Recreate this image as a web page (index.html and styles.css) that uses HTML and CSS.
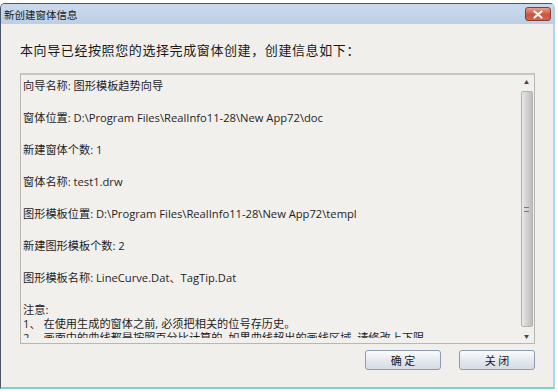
FILE: index.html
```html
<!DOCTYPE html>
<html lang="zh-CN">
<head>
    <meta charset="UTF-8">
    <meta name="viewport" content="width=device-width, initial-scale=1.0">
    <title>新创建窗体信息</title>
    <link rel="stylesheet" href="styles.css">
</head>
<body>
    <div class="window">
        <!-- 标题栏 -->
        <div class="title-bar">
            <span class="title">新创建窗体信息</span>
            <span class="close-btn">
                <svg width="12" height="9" viewBox="0 0 12 9">
                    <path d="M2.5 1.5 L9.5 7.5 M9.5 1.5 L2.5 7.5" stroke="#fff" stroke-width="2.2" stroke-linecap="round"/>
                </svg>
            </span>
        </div>

        <div class="content">
            <h2 class="heading">本向导已经按照您的选择完成窗体创建，创建信息如下：</h2>

            <!-- 信息列表 -->
            <div class="info-box">
                <div class="info-text">
                    <p>向导名称: 图形模板趋势向导</p>
                    <p>窗体位置: D:\Program Files\RealInfo11-28\New App72\doc</p>
                    <p>新建窗体个数: 1</p>
                    <p>窗体名称: test1.drw</p>
                    <p>图形模板位置: D:\Program Files\RealInfo11-28\New App72\templ</p>
                    <p>新建图形模板个数: 2</p>
                    <p>图形模板名称: LineCurve.Dat、TagTip.Dat</p>
                    <div class="notes">
                        注意:<br>
                        1、 在使用生成的窗体之前, 必须把相关的位号存历史。<br>
                        2、 画面中的曲线都是按照百分比计算的, 如果曲线超出的画线区域, 请修改上下限。
                    </div>
                </div>
                <div class="scrollbar">
                    <span class="arrow">&#9650;</span>
                    <div class="thumb"><span class="grip"></span></div>
                    <span class="arrow">&#9660;</span>
                </div>
            </div>

            <div class="buttons">
                <button>确 定</button>
                <button>关 闭</button>
            </div>
        </div>
    </div>
</body>
</html>
```

FILE: styles.css
```css
body {
    margin: 0;
    padding: 0;
    background-color: #fff;
    font-family: "Open Sans", "Noto Sans CJK SC", sans-serif;
    color: #1e1e1e;
}
.window {
    margin-top: 3px;
    width: 552px;
    height: 383px;
    border-top: 1px solid #4a5668;
    border-left: 1px solid #4a5668;
    border-right: 2px solid #a9d6ef;
    border-bottom: 2px solid #7fcfd2;
    border-radius: 5px 5px 0 0;
    background-color: #f1efeb;
    display: flex;
    flex-direction: column;
    overflow: hidden;
}
.title-bar {
    height: 20px;
    background: linear-gradient(to bottom, #cadaeb, #bccfe4);
    display: flex;
    align-items: center;
    justify-content: space-between;
    padding: 0 2px 0 3px;
}
.title {
    font-family: "Noto Sans CJK SC", sans-serif;
    font-size: 10.5px;
    color: #1a1a1a;
}
.close-btn {
    width: 26px;
    height: 14px;
    border: 1px solid #8a3a2e;
    border-radius: 3px;
    background: linear-gradient(to bottom, #e9a08e, #c9553e 55%, #d2664c);
    display: flex;
    align-items: center;
    justify-content: center;
    box-sizing: border-box;
}
.content {
    flex: 1;
    padding: 0 18px 0 19px;
    display: flex;
    flex-direction: column;
}
.heading {
    font-family: "Noto Sans CJK SC", sans-serif;
    font-size: 13px;
    letter-spacing: 0.6px;
    font-weight: normal;
    margin: 16px 0 0 0;
    height: 33px;
    line-height: 20px;
    color: #1a1a1a;
}
.info-box {
    height: 268px;
    border: 1px solid #bab6b1;
    border-top: 2px solid #c9c5c0;
    display: flex;
    background-color: #f2f0ed;
}
.info-text {
    flex: 1;
    padding: 4px 2px 0 2px;
    margin-bottom: 5px;
    font-size: 11.2px;
    line-height: 14px;
    overflow: hidden;
}
.info-text p {
    margin: 0 0 18px 0;
    white-space: nowrap;
}
.notes {
    white-space: nowrap;
}
.scrollbar {
    width: 13px;
    margin: 0 1px 0 0;
    display: flex;
    flex-direction: column;
    align-items: center;
}
.arrow {
    font-size: 5px;
    color: #444;
    height: 14px;
    line-height: 14px;
}
.thumb {
    flex: 1;
    width: 12px;
    margin: 2px 0;
    border: 1px solid #b3b3b3;
    border-radius: 2px;
    background: linear-gradient(to right, #e8e8e8, #d2d2d2 50%, #bdbdbd);
    display: flex;
    align-items: center;
    justify-content: center;
    box-sizing: border-box;
}
.grip {
    width: 5px;
    height: 5px;
    border-top: 1px solid #777;
    border-bottom: 1px solid #777;
    box-sizing: border-box;
}
.buttons {
    display: flex;
    justify-content: flex-end;
    gap: 18px;
    margin-top: 6px;
}
.buttons button {
    width: 76px;
    height: 20px;
    padding: 0;
    font-family: "Noto Sans CJK SC", sans-serif;
    font-size: 11px;
    color: #1a1a1a;
    border: 1px solid #8d9bb0;
    border-radius: 3px;
    background: linear-gradient(to bottom, #fbfbfb, #e6e9ee 50%, #d6dbe4);
}
```
